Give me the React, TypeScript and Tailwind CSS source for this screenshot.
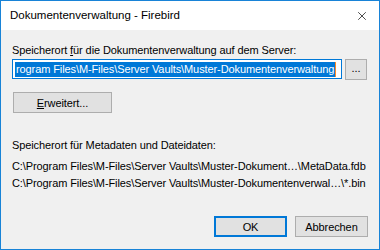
import { X } from 'lucide-react';

const font = { fontFamily: '"Liberation Sans", Arial, sans-serif' };

const Button = ({ children, primary = false, className = '' }: { children: React.ReactNode; primary?: boolean; className?: string }) => (
  <div
    className={
      'flex items-center justify-center bg-[#e1e1e1] text-black ' +
      (primary ? 'border-2 border-[#0078d7] ' : 'border border-[#adadad] ') +
      className
    }
  >
    {children}
  </div>
);

const App = () => {
  return (
    <div
      className="w-[380px] h-[250px] border border-[#1883d7] bg-[#f0f0f0] flex flex-col text-black text-[11px] tracking-[-0.1px]"
      style={font}
    >
      {/* title bar */}
      <div className="h-[29px] bg-white flex items-center pl-[9px] pr-[10px] text-[11.5px] tracking-[0px]">
        <span className="pt-[1px]">Dokumentenverwaltung - Firebird</span>
        <div className="flex-grow"></div>
        <X size={14} strokeWidth={1.2} className="text-black" />
      </div>

      <div className="flex-1 flex flex-col px-[11px] pt-[12px] leading-[16px] whitespace-nowrap">
        <div>
          Speicherort <u>f</u>ür die Dokumentenverwaltung auf dem Server:
        </div>

        <div className="flex items-start mt-[1px]">
          <div className="w-[330px] h-[20px] border border-[#0078d7] bg-white flex items-center pl-[2px] pr-[5px]">
            <div className="flex-1 flex">
              <span className="bg-[#0078d7] text-white leading-[15px] flex-1 pl-[1px]">
                rogram Files\M-Files\Server Vaults\Muster-Dokumentenverwaltung
              </span>
            </div>
            <div className="w-[1px] h-[15px] bg-[#ff8a28] shrink-0"></div>
          </div>
          <Button className="w-[22px] h-[21px] ml-[3px] pb-[3px]">...</Button>
        </div>

        <Button className="w-[99px] h-[21px] mt-[12px] ml-[1px]">
          <span>
            <u>E</u>rweitert...
          </span>
        </Button>

        <div className="mt-[24px]">Speicherort für Metadaten und Dateidaten:</div>
        <div className="mt-[5px] leading-[17px]">
          C:\Program Files\M-Files\Server Vaults\Muster-Dokument…\MetaData.fdb
        </div>
        <div className="leading-[17px]">
          C:\Program Files\M-Files\Server Vaults\Muster-Dokumentenverwal…\*.bin
        </div>

        <div className="flex-grow"></div>
        <div className="flex justify-end gap-[8px] mb-[12px]">
          <Button primary className="w-[73px] h-[21px]">
            OK
          </Button>
          <Button className="w-[73px] h-[21px]">Abbrechen</Button>
        </div>
      </div>
    </div>
  );
};

export default App;
